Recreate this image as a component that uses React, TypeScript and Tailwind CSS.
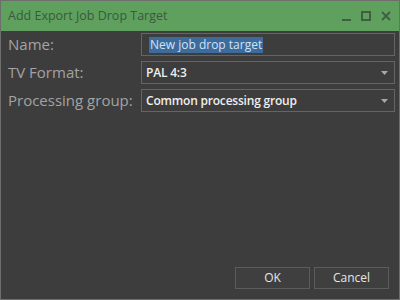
import React from "react";

// Cuadro de diálogo oscuro con barra de título verde
const font = { fontFamily: '"Open Sans", "Noto Sans", sans-serif' };

function Caret() {
  return (
    <svg width="7" height="4" viewBox="0 0 7 4" className="shrink-0">
      <path d="M0 0 L7 0 L3.5 4 Z" fill="#a8a8a8" />
    </svg>
  );
}

function SelectBox({ value }: { value: string }) {
  return (
    <div className="flex h-[23px] items-center justify-between border border-[#656565] pl-[4px] pr-[6px]">
      <span className="text-[12px] font-semibold tracking-[-0.2px] text-[#eeeeee]">{value}</span>
      <Caret />
    </div>
  );
}

export default function App() {
  return (
    <div
      className="flex h-[300px] w-[400px] flex-col border border-[#6e6e6e] bg-[#3d3d3d]"
      style={font}
    >
      {/* Barra de título */}
      <div className="flex h-[30px] shrink-0 items-center justify-between bg-[#5fa05f] pl-[7px] pr-[8px]">
        <span className="text-[12.5px] text-[#3a5a3a]">Add Export Job Drop Target</span>
        <div className="flex items-center gap-[10px]">
          <svg width="9" height="10" viewBox="0 0 9 10">
            <rect x="0" y="8" width="9" height="2" fill="#3f5f3f" />
          </svg>
          <svg width="10" height="10" viewBox="0 0 10 10">
            <rect x="1" y="1" width="8" height="8" fill="none" stroke="#3f5f3f" strokeWidth="2" />
          </svg>
          <svg width="10" height="10" viewBox="0 0 10 10">
            <path d="M1 1 L9 9 M9 1 L1 9" stroke="#3f5f3f" strokeWidth="1.8" />
          </svg>
        </div>
      </div>

      {/* Formulario */}
      <div className="grid grid-cols-[133px_1fr] gap-y-[5px] pl-[7px] pr-[4px] pt-[2px]">
        <span className="text-[15px] leading-[23px] text-[#a3a3a3]">Name:</span>
        <div className="flex h-[23px] items-center border border-[#656565] pl-[7px]">
          <span className="bg-[#3d6b9c] px-[1px] text-[12px] leading-[16px] text-[#cfe3f7]">
            New job drop target
          </span>
        </div>

        <span className="text-[15px] leading-[23px] text-[#a3a3a3]">TV Format:</span>
        <SelectBox value="PAL 4:3" />

        <span className="text-[15px] leading-[23px] text-[#a3a3a3]">Processing group:</span>
        <SelectBox value="Common processing group" />
      </div>

      <div className="flex-1" />

      {/* Botones */}
      <div className="flex justify-end gap-[4px] pb-[10px] pr-[10px]">
        <button className="h-[22px] w-[75px] border border-[#5c5c5c] bg-[#3f3f3f] text-[12px] text-[#e6e6e6]">
          OK
        </button>
        <button className="h-[22px] w-[75px] border border-[#5c5c5c] bg-[#3f3f3f] text-[12px] text-[#e6e6e6]">
          Cancel
        </button>
      </div>
    </div>
  );
}
